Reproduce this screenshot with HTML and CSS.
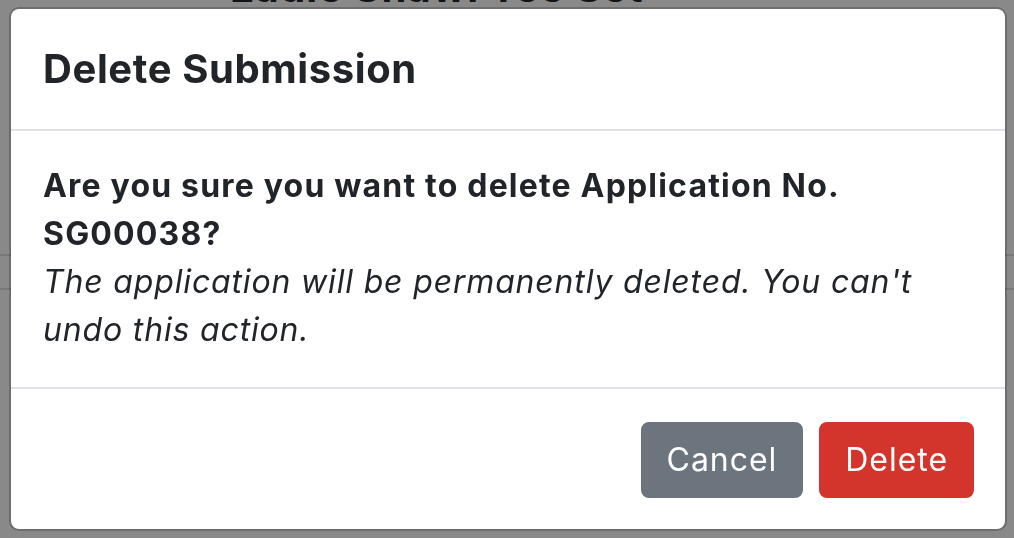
FILE: index.html
```html
<!DOCTYPE html>
<html lang="en">
<head>
<meta charset="utf-8">
<title>Delete Submission</title>
<link rel="stylesheet" href="styles.css">
</head>
<body>
<div class="page">
  <h1 class="page-title">Eadie Shawl Tee Set</h1>
  <div class="page-rows">
    <div class="page-row"></div>
    <div class="page-row"></div>
  </div>
</div>
<div class="backdrop"></div>
<div class="modal" role="dialog" aria-labelledby="modal-title">
  <div class="modal-header">
    <h5 class="modal-title" id="modal-title">Delete Submission</h5>
  </div>
  <div class="modal-body">
    <p class="question">Are you sure you want to delete Application No. SG00038?</p>
    <p class="note">The application will be permanently deleted. You can't undo this action.</p>
  </div>
  <div class="modal-footer">
    <button class="btn btn-secondary" type="button">Cancel</button>
    <button class="btn btn-danger" type="button">Delete</button>
  </div>
</div>
</body>
</html>
```
FILE: styles.css
```css
* { box-sizing: border-box; }
html, body { margin: 0; height: 100%; }
body {
  font-family: Inter, "Noto Sans", "DejaVu Sans", sans-serif;
  color: #212529;
  background: #ffffff;
  overflow: hidden;
}
.page { padding: 0 0 0 230px; }
.page-title {
  margin: -38px 0 0;
  font-size: 40px;
  line-height: 52px;
  font-weight: 700;
  letter-spacing: 0.03em;
  color: #212529;
}
.page-rows { margin: 240px 0 0 -230px; }
.page-row { height: 34px; border-top: 2px solid #dee2e6; }
.backdrop {
  position: fixed;
  inset: 0;
  background: rgba(0, 0, 0, 0.463);
}
.modal {
  position: fixed;
  top: 7px;
  left: 9px;
  width: 998px;
  background: #ffffff;
  border: 2px solid rgba(0, 0, 0, 0.2);
  background-clip: padding-box;
  border-radius: 10px;
}
.modal-header {
  padding: 30px 32px;
  border-bottom: 2px solid #dee2e6;
}
.modal-title {
  margin: 0;
  font-size: 40px;
  line-height: 60px;
  font-weight: 700;
  letter-spacing: 0.015em;
  color: #212529;
}
.modal-body {
  padding: 31px 32px 33px;
  font-size: 32px;
  line-height: 48px;
}
.modal-body p { margin: 0; }
.question { font-weight: 700; letter-spacing: 0.037em; }
.note { font-style: italic; letter-spacing: 0.026em; }
.modal-footer {
  display: flex;
  justify-content: flex-end;
  gap: 16px;
  padding: 33px 31px 31px;
  border-top: 2px solid #dee2e6;
}
.btn {
  font-family: inherit;
  font-size: 32px;
  line-height: 48px;
  font-weight: 400;
  letter-spacing: 0.03em;
  color: #ffffff;
  padding: 12px 24px;
  border: 2px solid transparent;
  border-radius: 8px;
  cursor: pointer;
}
.btn-secondary { background: #6c757d; border-color: #6c757d; }
.btn-danger { background: #d3342b; border-color: #d3342b; }
```
